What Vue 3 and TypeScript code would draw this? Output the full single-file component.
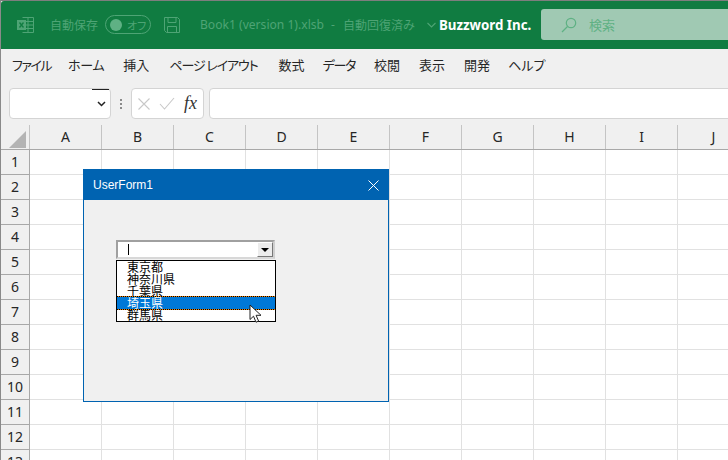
<script setup lang="ts">
const menus = [
  { t: 'ファイル', ls: -1.500, gap: 17 },
  { t: 'ホーム', ls: -0.300, gap: 19 },
  { t: '挿入', ls: 0, gap: 20 },
  { t: 'ページ レイアウト', ls: -1.100, gap: 21 },
  { t: '数式', ls: 0, gap: 18 },
  { t: 'データ', ls: -1.300, gap: 19 },
  { t: '校閲', ls: 0, gap: 19 },
  { t: '表示', ls: 0, gap: 19 },
  { t: '開発', ls: 0, gap: 18 },
  { t: 'ヘルプ', ls: 0, gap: 0 },
]
const cols = ['A', 'B', 'C', 'D', 'E', 'F', 'G', 'H', 'I', 'J']
const rows = [1, 2, 3, 4, 5, 6, 7, 8, 9, 10, 11, 12, 13]
const items = ['東京都', '神奈川県', '千葉県', '埼玉県', '群馬県']
</script>

<template>
  <div class="app">
    <header class="titlebar">
      <svg class="xl" width="17" height="16" viewBox="0 0 17 16" fill="none" stroke="#4ea475" stroke-width="1">
        <path d="M5.5 .5h11v15h-11M11 .5v15M5.5 4.5h11M5.5 8h11M5.5 11.5h11" />
        <rect x="0" y="3" width="9" height="10" fill="#4ea475" stroke="none" />
        <path d="M2.5 5.5l4 5M6.5 5.5l-4 5" stroke="#107c41" stroke-width="1.3" />
      </svg>
      <span class="autosave">自動保存</span>
      <div class="toggle"><i class="knob"></i><span>オフ</span></div>
      <svg class="save" width="16" height="16" viewBox="0 0 16 16" fill="none" stroke="#4ea475" stroke-width="1">
        <path d="M.5 .5h13l2 2v13H2.500l-2-2zM4 .5v5h8v-5M3.500 15.500v-6h9v6" />
      </svg>
      <div class="doc">
        <span class="doc-name">Book1 (version 1).xlsb</span>
        <span class="doc-dash">-</span>
        <span class="doc-state">自動回復済み</span>
      </div>
      <svg class="chev" width="9" height="6" viewBox="0 0 9 6" fill="none" stroke="#4ea475" stroke-width="1.100">
        <path d="M.5 1l4 4 4-4" />
      </svg>
      <span class="org">Buzzword Inc.</span>
      <div class="search">
        <svg width="16" height="16" viewBox="0 0 16 16" fill="none" stroke="#5fb184" stroke-width="1.200">
          <circle cx="10" cy="6" r="4.700" /><path d="M6.500 9.500L1 15" />
        </svg>
        <span>検索</span>
      </div>
    </header>

    <nav class="menu">
      <span
        v-for="m in menus"
        :key="m.t"
        :style="{ letterSpacing: m.ls + 'px', marginRight: m.gap + 'px' }"
      >{{ m.t }}</span>
    </nav>

    <div class="formula">
      <div class="namebox">
        <i class="namebox-mark"></i>
        <svg width="9" height="6" viewBox="0 0 9 6" fill="none" stroke="#222" stroke-width="1.500">
          <path d="M1 1l3.500 3.500L8 1" />
        </svg>
      </div>
      <div class="dots"><i></i><i></i><i></i></div>
      <div class="fxbox">
        <svg width="12" height="12" viewBox="0 0 12 12" fill="none" stroke="#c8c8c8" stroke-width="1.100">
          <path d="M.5 .5l11 11M11.500 .5l-11 11" />
        </svg>
        <svg width="16" height="13" viewBox="0 0 16 13" fill="none" stroke="#c8c8c8" stroke-width="1.100">
          <path d="M1 7l4.500 5L15 1" />
        </svg>
        <span class="fx">fx</span>
      </div>
      <div class="input"></div>
    </div>

    <section class="sheet">
      <div class="head-row">
        <div class="corner">
          <svg width="17" height="17" viewBox="0 0 17 17"><path d="M17 0v17H0z" fill="#b4b4b4" /></svg>
        </div>
        <div v-for="c in cols" :key="c" class="col-head">{{ c }}</div>
      </div>
      <div v-for="r in rows" :key="r" class="row">
        <div class="row-head">{{ r }}</div>
        <div v-for="c in cols" :key="c" class="cell"></div>
      </div>

      <div class="dialog">
        <div class="dialog-title">
          <span>UserForm1</span>
          <svg width="11" height="11" viewBox="0 0 11 11" fill="none" stroke="#fff" stroke-width="1">
            <path d="M.5 .5l10 10M10.500 .5l-10 10" />
          </svg>
        </div>
        <div class="dialog-body">
          <div class="combo">
            <div class="combo-field"><i class="caret"></i></div>
            <div class="combo-btn"><i class="arrow"></i></div>
          </div>
          <ul class="list">
            <li v-for="(it, i) in items" :key="it" :class="{ selected: i === 3 }">{{ it }}</li>
          </ul>
        </div>
      </div>

      <svg class="cursor" width="13" height="20" viewBox="0 0 13 20">
        <path d="M1 1v14.500l3.500-3.300 2.500 6 2.600-1.100-2.500-5.800H12z" fill="#fff" stroke="#222" stroke-width="1" />
      </svg>
    </section>
  </div>
</template>

<style scoped>
.app {
  width: 728px;
  height: 460px;
  overflow: hidden;
  position: relative;
  background: #f0f0f0;
  border-top: 1px solid #7e7e7e;
  border-left: 1px solid #8a8a8a;
  box-sizing: border-box;
  font-family: "Noto Sans CJK JP", "Liberation Sans", sans-serif;
  font-feature-settings: "palt";
  color: #262626;
}
.titlebar {
  height: 48px;
  box-sizing: border-box;
  background: #107c41;
  display: flex;
  align-items: center;
  font-size: 12px;
  color: #4ea475;
  white-space: nowrap;
  border-top-left-radius: 3px;
  padding-bottom: 1px;
}
.titlebar > * { flex: none; }
.xl { margin-left: 16px; }
.autosave { margin-left: 16px; width: 48px; font-feature-settings: normal; }
.toggle {
  margin-left: 7px;
  width: 46px;
  height: 19px;
  box-sizing: border-box;
  border: 1px solid #4ea475;
  border-radius: 10px;
  display: flex;
  align-items: center;
  padding-left: 4px;
  gap: 5px;
  font-size: 11px;
}
.knob { width: 12px; height: 12px; border-radius: 50%; background: #5fb184; flex: none; }
.save { margin-left: 13px; }
.doc { margin-left: 20px; width: 221px; display: flex; align-items: center; }
.doc-name { font-family: "Noto Sans", sans-serif; font-size: 12.100px; }
.doc-dash { margin-left: 7px; font-family: "Noto Sans", sans-serif; }
.doc-state { margin-left: 8px; font-feature-settings: normal; }
.chev { margin-left: 6px; }
.org { margin-left: 3px; color: #fff; font-weight: 700; font-size: 13.300px; width: 102px; font-family: "Noto Sans", sans-serif; }
.search {
  width: 200px;
  height: 31px;
  box-sizing: border-box;
  background: #a0c9b3;
  border-radius: 3px;
  display: flex;
  align-items: center;
  padding-left: 20px;
  gap: 12px;
  color: #5fb184;
  font-size: 13px;
}
.menu {
  height: 31px;
  display: flex;
  align-items: center;
  padding-left: 11px;
  box-sizing: border-box;
  font-size: 13px;
  white-space: nowrap;
  background: #f0f0f0;
}
.formula {
  height: 45px;
  box-sizing: border-box;
  display: flex;
  align-items: center;
  padding: 2px 0 0 8px;
}
.namebox, .fxbox, .input {
  height: 31px;
  box-sizing: border-box;
  background: #fff;
  border: 1px solid #d4d4d4;
  border-radius: 4px;
  flex: none;
}
.namebox {
  width: 102px;
  position: relative;
  display: flex;
  align-items: center;
  justify-content: flex-end;
  padding-right: 4px;
}
.namebox-mark { position: absolute; right: 1px; top: 0; width: 17px; height: 1px; background: #222; }
.dots { width: 20px; display: flex; flex-direction: column; align-items: center; gap: 2px; flex: none; }
.dots i { width: 2px; height: 2px; background: #8a8a8a; }
.fxbox {
  width: 73px;
  display: flex;
  align-items: center;
  padding-left: 6px;
  gap: 9px;
}
.fx { font-family: "Liberation Serif", serif; font-style: italic; font-size: 18px; color: #333; }
.input { margin-left: 5px; width: 560px; }
.sheet { position: relative; background: #fff; }
.head-row { display: flex; height: 25px; background: #f0f0f0; box-sizing: border-box; border-bottom: 1px solid #a8a8a8; }
.corner {
  width: 29px;
  flex: none;
  box-sizing: border-box;
  display: flex;
  align-items: flex-end;
  justify-content: flex-end;
  padding: 0 3px 1px 0;
  border-right: 1px solid #c4c4c4;
}
.col-head {
  width: 72px;
  flex: none;
  box-sizing: border-box;
  border-right: 1px solid #c4c4c4;
  text-align: center;
  font-size: 14px;
  line-height: 24px;
  font-family: "Noto Sans", sans-serif;
}
.row { display: flex; height: 25px; }
.row-head {
  width: 29px;
  flex: none;
  box-sizing: border-box;
  background: #f0f0f0;
  border-right: 1px solid #a8a8a8;
  border-bottom: 1px solid #a8a8a8;
  text-align: center;
  font-size: 14px;
  line-height: 24px;
  font-family: "Noto Sans", sans-serif;
}
.cell {
  width: 72px;
  flex: none;
  box-sizing: border-box;
  border-right: 1px solid #e1e1e1;
  border-bottom: 1px solid #e1e1e1;
}
.dialog {
  position: absolute;
  left: 82px;
  top: 44px;
  width: 306px;
  height: 233px;
  box-sizing: border-box;
  border: 1px solid #0063b1;
  background: #f0f0f0;
  display: flex;
  flex-direction: column;
}
.dialog-title {
  height: 30px;
  flex: none;
  background: #0063b1;
  color: #fff;
  font-size: 12px;
  font-family: "Liberation Sans", sans-serif;
  display: flex;
  align-items: center;
  justify-content: space-between;
  padding: 0 9px 0 9px;
}
.dialog-body { padding: 40px 0 0 32px; }
.combo {
  width: 159px;
  height: 19px;
  box-sizing: border-box;
  border: 2px solid #a0a0a0;
  border-right-color: #cfcfcf;
  border-bottom-color: #d8d8d8;
  background: #fff;
  display: flex;
}
.combo-field { flex: 1; padding: 2px 0 0 10px; }
.caret { display: block; width: 1px; height: 11px; background: #000; }
.combo-btn {
  width: 16px;
  flex: none;
  box-sizing: border-box;
  background: #ececec;
  border: 1px solid;
  border-color: #fff #777 #777 #fff;
  display: flex;
  align-items: center;
  justify-content: center;
}
.arrow { width: 0; height: 0; border-left: 4px solid transparent; border-right: 4px solid transparent; border-top: 4px solid #000; }
.list {
  list-style: none;
  margin: 1px 0 0;
  padding: 0;
  width: 160px;
  height: 62px;
  box-sizing: border-box;
  border: 1px solid #000;
  background: #fff;
  color: #000;
  font-size: 12px;
  font-feature-settings: normal;
  overflow: hidden;
}
.list li { height: 12px; line-height: 11px; padding-left: 10px; box-sizing: border-box; }
.list li.selected {
  position: relative;
  z-index: 1;
  background: #0078d7;
  color: #fff;
  outline: 1px dotted #000;
  box-shadow: 0 0 0 1px #f08000;
}
.cursor { position: absolute; left: 248px; top: 179px; z-index: 2; }
</style>
